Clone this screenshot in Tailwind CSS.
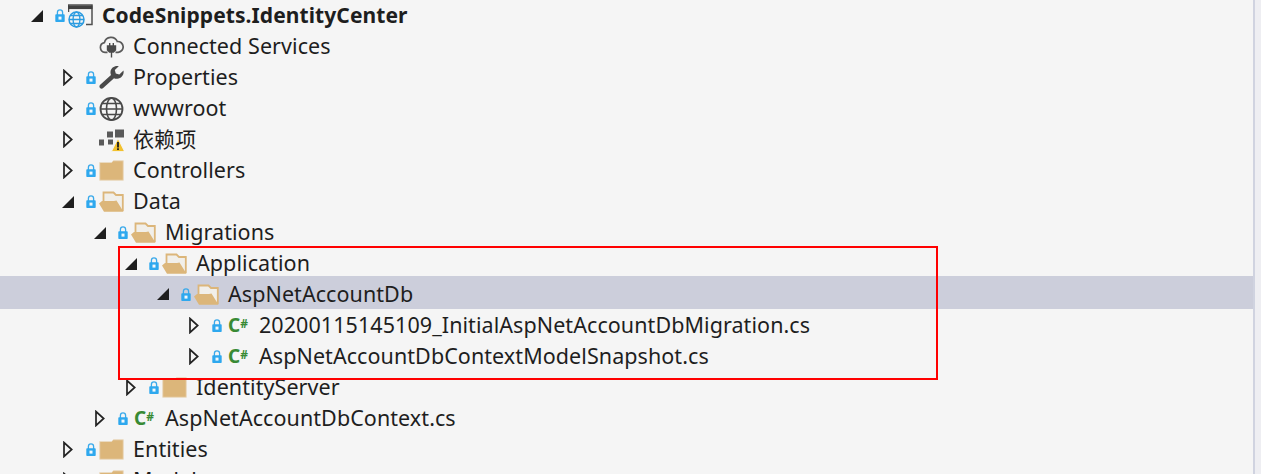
<!DOCTYPE html>
<html lang="zh">
<head>
<meta charset="utf-8">
<script src="https://cdn.jsdelivr.net/npm/@tailwindcss/browser@4"></script>
</head>
<body class="m-0 bg-[#f5f5f5]">
<svg width="0" height="0" class="absolute">
  <defs>
    <symbol id="filled" viewBox="0 0 12 12"><path d="M12 0V12H0Z" fill="#1e1e1e"/></symbol>
    <symbol id="hollow" viewBox="0 0 10 17"><path d="M1 1.500V15.500L8.700 8.500Z" fill="none" stroke="#222" stroke-width="1.700"/></symbol>
    <symbol id="lock" viewBox="0 0 10 13"><path d="M2.400 6V3.500a2.600 2.600 0 0 1 5.200 0V6" fill="none" stroke="#3aa9ea" stroke-width="1.300"/><rect x="0.300" y="5.300" width="9.400" height="7.700" rx="0.800" fill="#2ea8ee"/><rect x="3.500" y="7.600" width="3" height="3" fill="#f2f8fc"/></symbol>
    <symbol id="closed" viewBox="0 0 25 21"><path d="M0.700 2.500H12.500L14.500 0.700H24.300V20.300H0.700Z" fill="#dcb67a" stroke="#eadbc2" stroke-width="1"/></symbol>
    <symbol id="open" viewBox="0 0 25 21"><path d="M4.500 11V1.500H14.500L17 4H23.800V20" fill="#f1efea" stroke="#dcb67a" stroke-width="1.800"/><path d="M0 12.500L3 10H15L17.500 9.500L24.500 20.800H5Z" fill="#dcb67a"/></symbol>
  </defs>
</svg>

<main class="relative h-[474px] w-[1261px] overflow-hidden font-['Noto_Sans','Noto_Sans_CJK_SC',sans-serif] text-[21.5px] leading-[31px] tracking-[0.07px] text-[#1e1e1e]">
  <div class="absolute inset-y-0 right-0 flex w-[8px]">
    <div class="w-[2px] bg-[#d0d3e0]"></div>
    <div class="flex-1 bg-[#eeeef2]"></div>
  </div>

  <div class="mr-[8px]">
    <!-- root -->
    <div class="flex h-[31px] items-center pl-[25px]">
      <span class="flex w-[24px] justify-center"><svg class="h-[12px] w-[12px]"><use href="#filled"/></svg></span>
      <svg class="ml-[6px] h-[13px] w-[10px]"><use href="#lock"/></svg>
      <svg class="ml-[3px] h-[24px] w-[25px]" viewBox="0 0 25 24">
        <path d="M18 20.500H24V1H0.500V8" fill="none" stroke="#505050" stroke-width="1.500"/>
        <path d="M0 3.300H24.500" stroke="#404040" stroke-width="3.600"/>
        <circle cx="8.500" cy="15.500" r="7.500" fill="#f5f5f5" stroke="#2b9be0" stroke-width="1.500"/>
        <ellipse cx="8.500" cy="15.500" rx="3.400" ry="7.500" fill="none" stroke="#2b9be0" stroke-width="1.300"/>
        <path d="M1 15.500H16M2.300 11.500H14.700M2.300 19.500H14.700" stroke="#2b9be0" stroke-width="1.300"/>
      </svg>
      <span class="ml-[9px] text-[21px] font-bold tracking-[0.08px]">CodeSnippets.IdentityCenter</span>
    </div>

    <!-- connected services -->
    <div class="flex h-[31px] items-center pl-[56px]">
      <span class="w-[24px]"></span>
      <span class="ml-[6px] w-[10px]"></span>
      <svg class="ml-[3px] h-[22px] w-[25px]" viewBox="0 0 25 22">
        <path d="M8.500 16.300H6a4.900 4.900 0 0 1-.6-9.700A6.800 6.800 0 0 1 18.300 5.500a5.400 5.400 0 0 1 .9 10.800H16.500" fill="none" stroke="#5a5a5a" stroke-width="1.700"/>
        <path d="M8.500 10H16.500V14L14.500 16H10.500L8.500 14ZM10.700 7V10M14.300 7V10M12.500 16V21.500" fill="#4a4a4a" stroke="#4a4a4a" stroke-width="1.400"/>
      </svg>
      <span class="-mt-[2px] ml-[9px]">Connected Services</span>
    </div>

    <!-- properties -->
    <div class="flex h-[31px] items-center pl-[56px]">
      <span class="flex w-[24px] justify-center"><svg class="h-[17px] w-[10px]"><use href="#hollow"/></svg></span>
      <svg class="ml-[6px] h-[13px] w-[10px]"><use href="#lock"/></svg>
      <svg class="ml-[3px] h-[23px] w-[25px]" viewBox="0 0 25 23">
        <path d="M24.500 4.500L20.300 8.500L16.800 7.500L15.800 4L19.800 0.300C16 -0.600 11.800 1.800 11.500 6C11.400 7.300 11.700 8.300 12 9L1.200 18.800C0.200 19.800 0.200 21 1 22C1.900 23 3.200 23 4.200 22.100L15 12.200C16 12.700 17.200 12.900 18.400 12.700C22.500 12.200 25.300 8.600 24.500 4.500Z" fill="#4a4a4a"/>
      </svg>
      <span class="-mt-[2px] ml-[9px]">Properties</span>
    </div>

    <!-- wwwroot -->
    <div class="flex h-[31px] items-center pl-[56px]">
      <span class="flex w-[24px] justify-center"><svg class="h-[17px] w-[10px]"><use href="#hollow"/></svg></span>
      <svg class="ml-[6px] h-[13px] w-[10px]"><use href="#lock"/></svg>
      <svg class="ml-[3px] h-[24px] w-[25px]" viewBox="0 0 25 24">
        <circle cx="12.500" cy="12" r="11" fill="none" stroke="#4a4a4a" stroke-width="1.800"/>
        <ellipse cx="12.500" cy="12" rx="5" ry="11" fill="none" stroke="#4a4a4a" stroke-width="1.600"/>
        <path d="M1.500 12H23.500M3 6.500H22M3 17.500H22" stroke="#4a4a4a" stroke-width="1.600"/>
      </svg>
      <span class="-mt-[2px] ml-[9px]">wwwroot</span>
    </div>

    <!-- dependencies -->
    <div class="flex h-[31px] items-center pl-[56px]">
      <span class="flex w-[24px] justify-center"><svg class="h-[17px] w-[10px]"><use href="#hollow"/></svg></span>
      <span class="ml-[6px] w-[10px]"></span>
      <svg class="ml-[2px] h-[24px] w-[26px]" viewBox="0 0 26 24">
        <path d="M17 1.500H26V9.500H17ZM9 3.500H15V9.500H9ZM1 11.500H6V17.500H1ZM10 11.500H15V16.500H10Z" fill="#5a5a5a"/>
        <path d="M20 10.500L26.500 23.500H13.500Z" fill="#f2c12e" stroke="#f5f5f5" stroke-width="0.800"/>
        <path d="M19.100 14H20.900V19.500H19.100ZM19.100 20.300H20.900V22H19.100Z" fill="#1e1e1e"/>
      </svg>
      <span class="ml-[9px] text-[21px]">依赖项</span>
    </div>

    <!-- controllers -->
    <div class="flex h-[31px] items-center pl-[56px]">
      <span class="flex w-[24px] justify-center"><svg class="h-[17px] w-[10px]"><use href="#hollow"/></svg></span>
      <svg class="ml-[6px] h-[13px] w-[10px]"><use href="#lock"/></svg>
      <svg class="ml-[3px] h-[21px] w-[25px]"><use href="#closed"/></svg>
      <span class="-mt-[2px] ml-[9px]">Controllers</span>
    </div>

    <!-- data -->
    <div class="flex h-[31px] items-center pl-[56px]">
      <span class="flex w-[24px] justify-center"><svg class="h-[12px] w-[12px]"><use href="#filled"/></svg></span>
      <svg class="ml-[6px] h-[13px] w-[10px]"><use href="#lock"/></svg>
      <svg class="ml-[3px] h-[21px] w-[25px]"><use href="#open"/></svg>
      <span class="-mt-[2px] ml-[9px]">Data</span>
    </div>

    <!-- migrations -->
    <div class="flex h-[31px] items-center pl-[88px]">
      <span class="flex w-[24px] justify-center"><svg class="h-[12px] w-[12px]"><use href="#filled"/></svg></span>
      <svg class="ml-[6px] h-[13px] w-[10px]"><use href="#lock"/></svg>
      <svg class="ml-[3px] h-[21px] w-[25px]"><use href="#open"/></svg>
      <span class="-mt-[2px] ml-[9px]">Migrations</span>
    </div>

    <!-- application -->
    <div class="flex h-[31px] items-center pl-[119px]">
      <span class="flex w-[24px] justify-center"><svg class="h-[12px] w-[12px]"><use href="#filled"/></svg></span>
      <svg class="ml-[6px] h-[13px] w-[10px]"><use href="#lock"/></svg>
      <svg class="ml-[3px] h-[21px] w-[25px]"><use href="#open"/></svg>
      <span class="-mt-[2px] ml-[9px]">Application</span>
    </div>

    <!-- selected -->
    <div class="-mt-[3px] mb-[1px] flex h-[33px] items-center bg-[#cccedb] pl-[151px] pt-[3px]">
      <span class="flex w-[24px] justify-center"><svg class="h-[12px] w-[12px]"><use href="#filled"/></svg></span>
      <svg class="ml-[6px] h-[13px] w-[10px]"><use href="#lock"/></svg>
      <svg class="ml-[3px] h-[21px] w-[25px]"><use href="#open"/></svg>
      <span class="-mt-[2px] ml-[9px]">AspNetAccountDb</span>
    </div>

    <!-- cs files -->
    <div class="flex h-[31px] items-center pl-[182px]">
      <span class="flex w-[24px] justify-center"><svg class="h-[17px] w-[10px]"><use href="#hollow"/></svg></span>
      <svg class="ml-[6px] h-[13px] w-[10px]"><use href="#lock"/></svg>
      <span class="ml-[6px] flex w-[22px] items-start font-bold leading-[15px] tracking-normal text-[#388a34]"><span class="text-[19px]">C</span><span class="text-[12px] leading-[11px]">#</span></span>
      <span class="-mt-[2px] ml-[9px]">20200115145109_InitialAspNetAccountDbMigration.cs</span>
    </div>
    <div class="flex h-[31px] items-center pl-[182px]">
      <span class="flex w-[24px] justify-center"><svg class="h-[17px] w-[10px]"><use href="#hollow"/></svg></span>
      <svg class="ml-[6px] h-[13px] w-[10px]"><use href="#lock"/></svg>
      <span class="ml-[6px] flex w-[22px] items-start font-bold leading-[15px] tracking-normal text-[#388a34]"><span class="text-[19px]">C</span><span class="text-[12px] leading-[11px]">#</span></span>
      <span class="-mt-[2px] ml-[9px]">AspNetAccountDbContextModelSnapshot.cs</span>
    </div>

    <!-- identity server -->
    <div class="flex h-[31px] items-center pl-[119px]">
      <span class="flex w-[24px] justify-center"><svg class="h-[17px] w-[10px]"><use href="#hollow"/></svg></span>
      <svg class="ml-[6px] h-[13px] w-[10px]"><use href="#lock"/></svg>
      <svg class="ml-[3px] h-[21px] w-[25px]"><use href="#closed"/></svg>
      <span class="-mt-[2px] ml-[9px]">IdentityServer</span>
    </div>

    <!-- context -->
    <div class="flex h-[31px] items-center pl-[88px]">
      <span class="flex w-[24px] justify-center"><svg class="h-[17px] w-[10px]"><use href="#hollow"/></svg></span>
      <svg class="ml-[6px] h-[13px] w-[10px]"><use href="#lock"/></svg>
      <span class="ml-[6px] flex w-[22px] items-start font-bold leading-[15px] tracking-normal text-[#388a34]"><span class="text-[19px]">C</span><span class="text-[12px] leading-[11px]">#</span></span>
      <span class="-mt-[2px] ml-[9px]">AspNetAccountDbContext.cs</span>
    </div>

    <!-- entities -->
    <div class="flex h-[31px] items-center pl-[56px]">
      <span class="flex w-[24px] justify-center"><svg class="h-[17px] w-[10px]"><use href="#hollow"/></svg></span>
      <svg class="ml-[6px] h-[13px] w-[10px]"><use href="#lock"/></svg>
      <svg class="ml-[3px] h-[21px] w-[25px]"><use href="#closed"/></svg>
      <span class="-mt-[2px] ml-[9px]">Entities</span>
    </div>

    <!-- models -->
    <div class="flex h-[31px] items-center pl-[56px]">
      <span class="flex w-[24px] justify-center"><svg class="h-[17px] w-[10px]"><use href="#hollow"/></svg></span>
      <svg class="ml-[6px] h-[13px] w-[10px]"><use href="#lock"/></svg>
      <svg class="ml-[3px] h-[21px] w-[25px]"><use href="#closed"/></svg>
      <span class="-mt-[2px] ml-[9px]">Models</span>
    </div>
  </div>

  <!-- red annotation rectangle -->
  <div class="absolute left-[118px] top-[246px] h-[134px] w-[820px] border-2 border-[#ff0000]"></div>
</main>
</body>
</html>
